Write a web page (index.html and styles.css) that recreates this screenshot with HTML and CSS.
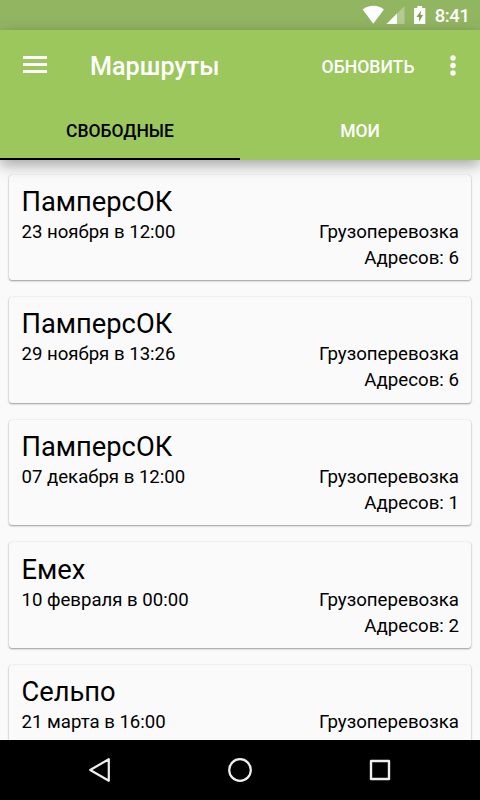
FILE: index.html
```html
<!DOCTYPE html>
<html lang="ru">
<head>
  <meta charset="UTF-8" />
  <meta name="viewport" content="width=device-width, initial-scale=1.0"/>
  <title>Маршруты</title>
  <link rel="stylesheet" href="styles.css">
</head>
<body>
  <div class="status-bar">
    <svg class="status-icons" width="66" height="30" viewBox="0 0 66 30">
      <!-- wifi -->
      <path d="M0.7 9.4C6.8 4.6 15.8 4.6 21.9 9.4L11.3 23.7z" fill="#fff"/>
      <!-- signal -->
      <path d="M42.5 6v18h-18z" fill="#fff" fill-opacity=".3"/>
      <path d="M35 13.5V24H24.5z" fill="#fff"/>
      <!-- battery -->
      <path d="M55.3 6h4.8v2h3.2v16H52.1V8h3.2z" fill="#fff"/>
      <path d="M59.2 10.5l-4.8 6.6h2.7v4.6l4-6.8h-2.6z" fill="#7d9c55"/>
    </svg>
    <span class="clock">8:41</span>
  </div>

  <header class="app-bar">
    <div class="toolbar">
      <svg class="menu-icon" width="24" height="18" viewBox="0 0 24 18">
        <path d="M0 0h24v3H0zM0 7h24v3H0zM0 14h24v3H0z" fill="#fff"/>
      </svg>
      <h1 class="title">Маршруты</h1>
      <span class="action">ОБНОВИТЬ</span>
      <svg class="more-icon" width="6" height="22" viewBox="0 0 6 22">
        <circle cx="3" cy="3" r="2.7" fill="#fff"/>
        <circle cx="3" cy="10.5" r="2.7" fill="#fff"/>
        <circle cx="3" cy="18" r="2.7" fill="#fff"/>
      </svg>
    </div>
    <nav class="tabs">
      <div class="tab active">СВОБОДНЫЕ</div>
      <div class="tab">МОИ</div>
    </nav>
  </header>

  <main class="routes">
    <div class="card">
      <h2 class="name">ПамперсОК</h2>
      <div class="row"><span>23 ноября в 12:00</span><span class="right">Грузоперевозка</span></div>
      <div class="row end"><span class="right">Адресов: 6</span></div>
    </div>
    <div class="card">
      <h2 class="name">ПамперсОК</h2>
      <div class="row"><span>29 ноября в 13:26</span><span class="right">Грузоперевозка</span></div>
      <div class="row end"><span class="right">Адресов: 6</span></div>
    </div>
    <div class="card">
      <h2 class="name">ПамперсОК</h2>
      <div class="row"><span>07 декабря в 12:00</span><span class="right">Грузоперевозка</span></div>
      <div class="row end"><span class="right">Адресов: 1</span></div>
    </div>
    <div class="card">
      <h2 class="name">Емех</h2>
      <div class="row"><span>10 февраля в 00:00</span><span class="right">Грузоперевозка</span></div>
      <div class="row end"><span class="right">Адресов: 2</span></div>
    </div>
    <div class="card">
      <h2 class="name">Сельпо</h2>
      <div class="row"><span>21 марта в 16:00</span><span class="right">Грузоперевозка</span></div>
    </div>
  </main>

  <footer class="nav-bar">
    <svg width="24" height="26" viewBox="0 0 24 26">
      <path d="M20.8 2.2v21.6L2.2 13z" fill="none" stroke="#eee" stroke-width="2.2" stroke-linejoin="round"/>
    </svg>
    <svg width="24" height="26" viewBox="0 0 24 26">
      <circle cx="12" cy="13" r="10.8" fill="none" stroke="#eee" stroke-width="2.2"/>
    </svg>
    <svg width="24" height="26" viewBox="0 0 24 26">
      <rect x="3" y="4" width="18" height="18" fill="none" stroke="#eee" stroke-width="2.4" stroke-linejoin="round"/>
    </svg>
  </footer>
</body>
</html>
```
FILE: styles.css
```css
/* Global reset & base */
* { box-sizing: border-box; margin: 0; padding: 0; }
html, body { height: 100%; overflow: hidden; }
body {
  display: flex;
  flex-direction: column;
  font-family: Roboto, sans-serif;
  background: #fafafa;
  color: #000;
}
svg { display: block; flex: none; overflow: visible; }

/* Status bar */
.status-bar {
  display: flex;
  align-items: center;
  justify-content: flex-end;
  flex: none;
  height: 30px;
  padding-right: 10.5px;
  background: #92b562;
  color: #fff;
}
.clock {
  margin-left: 6.5px;
  padding-top: 2px;
  font-size: 18.5px;
  font-weight: 500;
  line-height: 30px;
  letter-spacing: -.4px;
}

/* Toolbar and tabs */
.app-bar {
  position: relative;
  z-index: 1;
  flex: none;
  height: 130px;
  background: #9bc75d;
  color: #fff;
  box-shadow: 0 5px 14px rgba(0, 0, 0, .35);
}
.toolbar {
  display: flex;
  align-items: center;
  height: 72px;
  padding: 0 24.5px 0 23px;
}
.menu-icon { margin-bottom: 2px; }
.title {
  margin-left: 43px;
  font-size: 25.2px;
  font-weight: 500;
}
.action {
  margin-left: auto;
  padding-top: 1px;
  font-size: 17.6px;
  font-weight: 500;
}
.more-icon { margin-left: 35px; }
.tabs { display: flex; height: 58px; }
.tab {
  flex: 1;
  font-size: 17.5px;
  font-weight: 500;
  line-height: 59px;
  text-align: center;
}
.tab.active {
  color: #000;
  border-bottom: 2px solid #000;
}

/* Route list */
.routes {
  display: flex;
  flex-direction: column;
  gap: 17px;
  flex: 1;
  min-height: 0;
  padding: 14.5px 9px 0;
  overflow: hidden;
}
.card {
  flex: none;
  height: 105.6px;
  padding: 10.4px 12px 0 12.5px;
  border-radius: 3px;
  background: #fafafa;
  box-shadow: 0 1px 2px rgba(0, 0, 0, .38), 0 0 1px rgba(0, 0, 0, .2);
}
.name {
  font-size: 27.3px;
  font-weight: 400;
  line-height: 34px;
}
.row {
  display: flex;
  justify-content: space-between;
  font-size: 18.6px;
  line-height: 26px;
}
.row.end { justify-content: flex-end; }
.right { font-size: 18.7px; }

/* System navigation */
.nav-bar {
  display: flex;
  align-items: center;
  justify-content: center;
  gap: 116px;
  flex: none;
  height: 60px;
  background: #000;
}
```
